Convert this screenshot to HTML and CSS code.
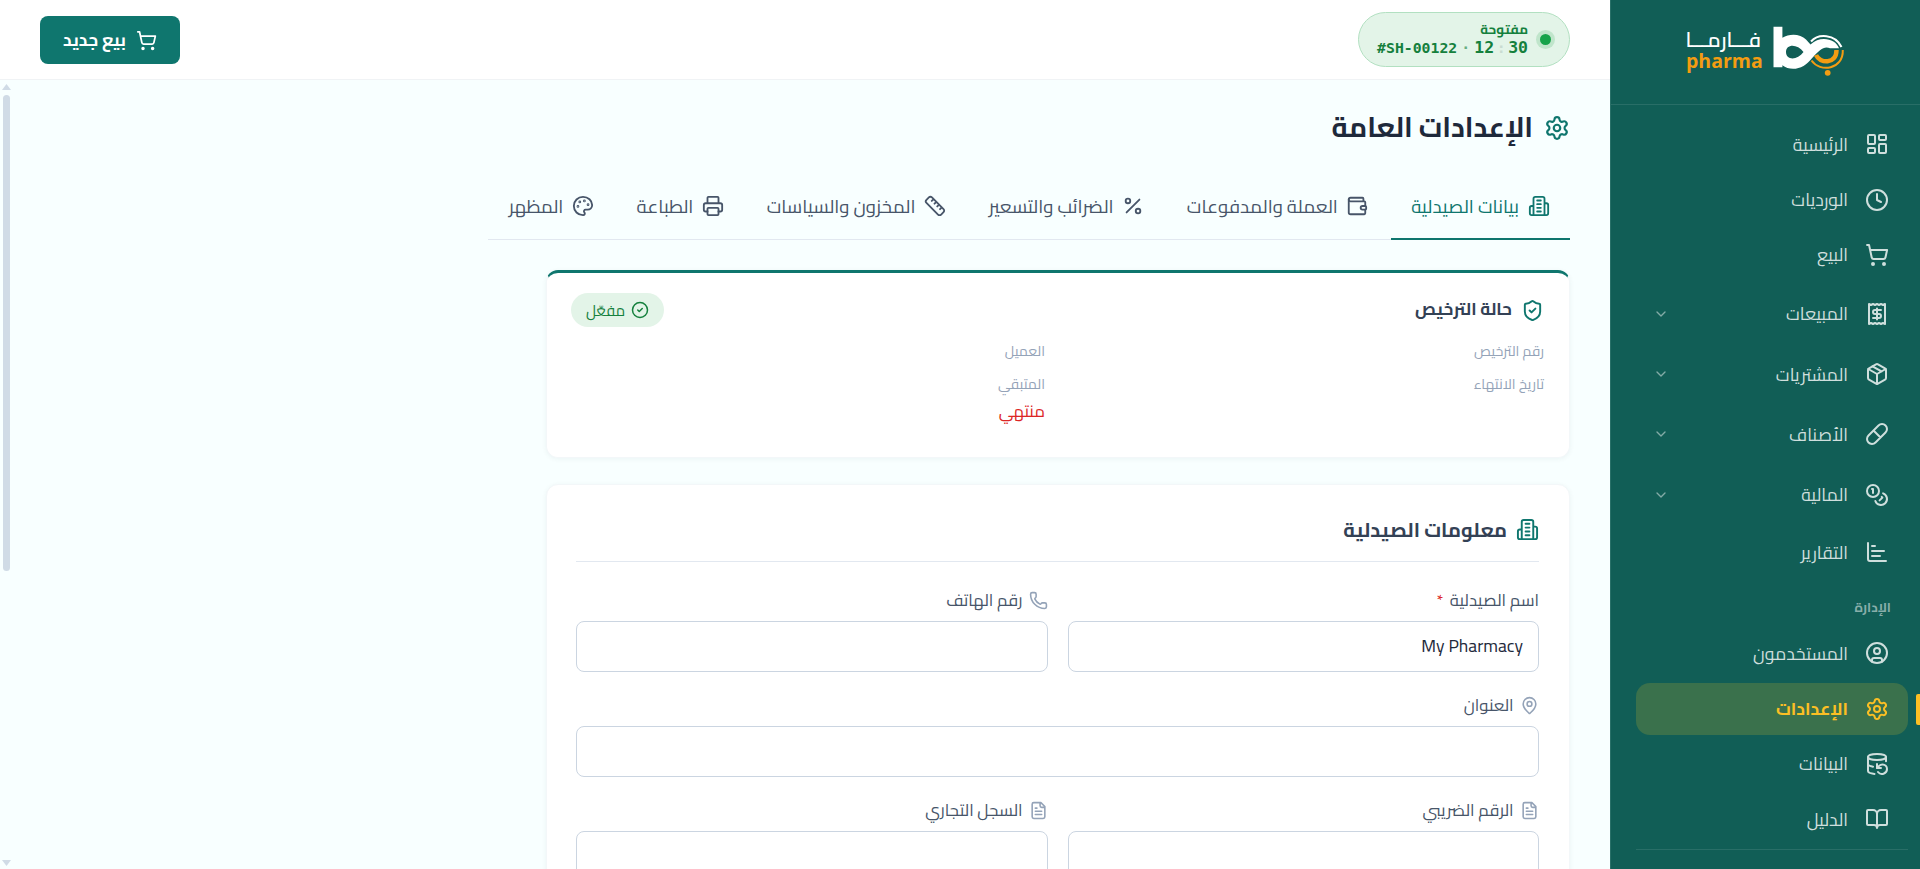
FILE: index.html
```html
<!DOCTYPE html>
<html lang="ar" dir="rtl">
<head>
<meta charset="utf-8">
<title>الإعدادات العامة</title>
<link rel="stylesheet" href="styles.css">
</head>
<body>
<svg class="sprite" aria-hidden="true">
  <symbol id="dashboard" viewBox="0 0 24 24"><rect x="3" y="3" width="7" height="9" rx="1"/><rect x="14" y="3" width="7" height="5" rx="1"/><rect x="14" y="12" width="7" height="9" rx="1"/><rect x="3" y="16" width="7" height="5" rx="1"/></symbol>
  <symbol id="clock" viewBox="0 0 24 24"><circle cx="12" cy="12" r="10"/><path d="M12 6v6l4 2"/></symbol>
  <symbol id="cart" viewBox="0 0 24 24"><circle cx="8" cy="21" r="1"/><circle cx="19" cy="21" r="1"/><path d="M2.05 2.05h2l2.66 12.42a2 2 0 0 0 2 1.58h9.78a2 2 0 0 0 1.95-1.57l1.65-7.43H5.12"/></symbol>
  <symbol id="receipt" viewBox="0 0 24 24"><path d="M4 2v20l2-1 2 1 2-1 2 1 2-1 2 1 2-1 2 1V2l-2 1-2-1-2 1-2-1-2 1-2-1-2 1Z"/><path d="M16 8h-6a2 2 0 1 0 0 4h4a2 2 0 1 1 0 4H8M12 17.5v-11"/></symbol>
  <symbol id="package" viewBox="0 0 24 24"><path d="M11 21.73a2 2 0 0 0 2 0l7-4A2 2 0 0 0 21 16V8a2 2 0 0 0-1-1.73l-7-4a2 2 0 0 0-2 0l-7 4A2 2 0 0 0 3 8v8a2 2 0 0 0 1 1.73z"/><path d="M12 22V12M3.29 7 12 12l8.71-5M7.5 4.27l9 5.15"/></symbol>
  <symbol id="pill" viewBox="0 0 24 24"><path d="m10.5 20.5 10-10a4.95 4.95 0 1 0-7-7l-10 10a4.95 4.95 0 1 0 7 7ZM8.5 8.5l7 7"/></symbol>
  <symbol id="coins" viewBox="0 0 24 24"><circle cx="8" cy="8" r="6"/><path d="M18.09 10.37A6 6 0 1 1 10.34 18M7 6h1v4M16.71 13.88l.7.71-2.82 2.82"/></symbol>
  <symbol id="chart" viewBox="0 0 24 24"><path d="M3 3v16a2 2 0 0 0 2 2h16M7 16h8M7 11h12M7 6h3"/></symbol>
  <symbol id="user" viewBox="0 0 24 24"><circle cx="12" cy="12" r="10"/><circle cx="12" cy="10" r="3"/><path d="M7 20.662V19a2 2 0 0 1 2-2h6a2 2 0 0 1 2 2v1.662"/></symbol>
  <symbol id="gear" viewBox="0 0 24 24"><path d="M9.671 4.136a2.34 2.34 0 0 1 4.659 0 2.34 2.34 0 0 0 3.319 1.915 2.34 2.34 0 0 1 2.33 4.033 2.34 2.34 0 0 0 0 3.831 2.34 2.34 0 0 1-2.33 4.033 2.34 2.34 0 0 0-3.319 1.915 2.34 2.34 0 0 1-4.659 0 2.34 2.34 0 0 0-3.32-1.915 2.34 2.34 0 0 1-2.33-4.033 2.34 2.34 0 0 0 0-3.831A2.34 2.34 0 0 1 6.35 6.051a2.34 2.34 0 0 0 3.319-1.915"/><circle cx="12" cy="12" r="3"/></symbol>
  <symbol id="database" viewBox="0 0 24 24"><ellipse cx="12" cy="5" rx="9" ry="3"/><path d="M3 12a9 3 0 0 0 5 2.69M21 9.3V5M3 5v14a9 3 0 0 0 6.47 2.88M12 12v4h4"/><path d="M13 20a5 5 0 0 0 9-3 4.5 4.5 0 0 0-4.5-4.5c-1.33 0-2.54.54-3.41 1.41L12 16"/></symbol>
  <symbol id="book" viewBox="0 0 24 24"><path d="M12 7v14M3 18a1 1 0 0 1-1-1V4a1 1 0 0 1 1-1h5a4 4 0 0 1 4 4 4 4 0 0 1 4-4h5a1 1 0 0 1 1 1v13a1 1 0 0 1-1 1h-6a3 3 0 0 0-3 3 3 3 0 0 0-3-3z"/></symbol>
  <symbol id="chevron" viewBox="0 0 24 24"><path d="m6 9 6 6 6-6"/></symbol>
  <symbol id="building" viewBox="0 0 24 24"><path d="M6 22V4a2 2 0 0 1 2-2h8a2 2 0 0 1 2 2v18ZM6 12H4a2 2 0 0 0-2 2v6a2 2 0 0 0 2 2h2M18 9h2a2 2 0 0 1 2 2v9a2 2 0 0 1-2 2h-2M10 6h4M10 10h4M10 14h4M10 18h4"/></symbol>
  <symbol id="wallet" viewBox="0 0 24 24"><path d="M19 7V4a1 1 0 0 0-1-1H5a2 2 0 0 0 0 4h15a1 1 0 0 1 1 1v4h-3a2 2 0 0 0 0 4h3a1 1 0 0 0 1-1v-2a1 1 0 0 0-1-1"/><path d="M3 5v14a2 2 0 0 0 2 2h15a1 1 0 0 0 1-1v-4"/></symbol>
  <symbol id="percent" viewBox="0 0 24 24"><path d="M19 5 5 19"/><circle cx="6.5" cy="6.5" r="2.5"/><circle cx="17.5" cy="17.5" r="2.5"/></symbol>
  <symbol id="ruler" viewBox="0 0 24 24"><path d="M21.3 15.3a2.4 2.4 0 0 1 0 3.4l-2.6 2.6a2.4 2.4 0 0 1-3.4 0L2.7 8.7a2.41 2.41 0 0 1 0-3.4l2.6-2.6a2.41 2.41 0 0 1 3.4 0ZM14.5 12.5l2-2M11.5 9.5l2-2M8.5 6.5l2-2M17.5 15.5l2-2"/></symbol>
  <symbol id="printer" viewBox="0 0 24 24"><path d="M6 18H4a2 2 0 0 1-2-2v-5a2 2 0 0 1 2-2h16a2 2 0 0 1 2 2v5a2 2 0 0 1-2 2h-2M6 9V3a1 1 0 0 1 1-1h10a1 1 0 0 1 1 1v6"/><rect x="6" y="14" width="12" height="8" rx="1"/></symbol>
  <symbol id="palette" viewBox="0 0 24 24"><path d="M12 22a1 1 0 0 1 0-20 10 9 0 0 1 10 9 5 5 0 0 1-5 5h-2.25a1.75 1.75 0 0 0-1.4 2.8l.3.4a1.75 1.75 0 0 1-1.4 2.8z"/><circle cx="13.5" cy="6.5" r=".5"/><circle cx="17.5" cy="10.5" r=".5"/><circle cx="6.5" cy="12.5" r=".5"/><circle cx="8.5" cy="7.5" r=".5"/></symbol>
  <symbol id="shield" viewBox="0 0 24 24"><path d="M20 13c0 5-3.5 7.5-7.66 8.95a1 1 0 0 1-.67-.01C7.5 20.5 4 18 4 13V6a1 1 0 0 1 1-1c2 0 4.5-1.2 6.24-2.72a1.17 1.17 0 0 1 1.52 0C14.51 3.81 17 5 19 5a1 1 0 0 1 1 1zM9 12l2 2 4-4"/></symbol>
  <symbol id="check" viewBox="0 0 24 24"><circle cx="12" cy="12" r="10"/><path d="m9 12 2 2 4-4"/></symbol>
  <symbol id="phone" viewBox="0 0 24 24"><path d="M13.832 16.568a1 1 0 0 0 1.213-.303l.355-.465A2 2 0 0 1 17 15h3a2 2 0 0 1 2 2v3a2 2 0 0 1-2 2A18 18 0 0 1 2 4a2 2 0 0 1 2-2h3a2 2 0 0 1 2 2v3a2 2 0 0 1-.8 1.6l-.468.351a1 1 0 0 0-.292 1.233 14 14 0 0 0 6.392 6.384"/></symbol>
  <symbol id="pin" viewBox="0 0 24 24"><path d="M20 10c0 4.993-5.539 10.193-7.399 11.799a1 1 0 0 1-1.202 0C9.539 20.193 4 14.993 4 10a8 8 0 0 1 16 0"/><circle cx="12" cy="10" r="3"/></symbol>
  <symbol id="file" viewBox="0 0 24 24"><path d="M15 2H6a2 2 0 0 0-2 2v16a2 2 0 0 0 2 2h12a2 2 0 0 0 2-2V7ZM14 2v4a2 2 0 0 0 2 2h4M10 9H8M16 13H8M16 17H8"/></symbol>
</svg>

<div class="app">
  <aside class="sidebar">
    <div class="brand">
      <svg class="brand-mark" viewBox="0 0 72 51">
        <path class="mark-white" fill-rule="evenodd" d="M.5.7h8.900v11.100C16.500 7.300 27.500 7.800 33 13.500L37.500 18.500C42 14.500 46 13 51 13c7 0 13 3.600 15 9.200h-9c-3-1.400-6.700-1-9.700 1.800C41 29 36.500 36.500 30.500 40c-7 4-15.500 3.700-21.100-.7v1.900H.5zM13 26c0 8.500 11.500 8.500 17.500 0C24.500 17.500 13 17.500 13 26z"/>
        <path class="ring ring-white" d="M38 15.500c7-8 24-8 30.500 5.500"/>
        <path class="ring ring-orange" d="M38.500 34.500c8.500 12.500 32 9 31.300-10.500"/>
        <path class="crescent" d="M43 29c3.500 8.500 20.500 10 20.500-5"/>
        <circle class="mark-orange" cx="54.700" cy="46.800" r="2.900"/>
      </svg>
      <div class="brand-text"><span class="brand-ar">فـــارمـــا</span><span class="brand-en">pharma</span></div>
    </div>
    <nav class="nav">
      <a class="item"><svg class="ic"><use href="#dashboard"/></svg><span>الرئيسية</span></a>
      <a class="item"><svg class="ic"><use href="#clock"/></svg><span>الورديات</span></a>
      <a class="item"><svg class="ic"><use href="#cart"/></svg><span>البيع</span></a>
      <a class="item group"><svg class="ic"><use href="#receipt"/></svg><span>المبيعات</span><svg class="chev"><use href="#chevron"/></svg></a>
      <a class="item group"><svg class="ic"><use href="#package"/></svg><span>المشتريات</span><svg class="chev"><use href="#chevron"/></svg></a>
      <a class="item group"><svg class="ic"><use href="#pill"/></svg><span>الأصناف</span><svg class="chev"><use href="#chevron"/></svg></a>
      <a class="item group"><svg class="ic"><use href="#coins"/></svg><span>المالية</span><svg class="chev"><use href="#chevron"/></svg></a>
      <a class="item"><svg class="ic"><use href="#chart"/></svg><span>التقارير</span></a>
      <div class="section">الإدارة</div>
      <a class="item"><svg class="ic"><use href="#user"/></svg><span>المستخدمون</span></a>
      <a class="item active"><svg class="ic"><use href="#gear"/></svg><span>الإعدادات</span></a>
      <a class="item"><svg class="ic"><use href="#database"/></svg><span>البيانات</span></a>
      <a class="item"><svg class="ic"><use href="#book"/></svg><span>الدليل</span></a>
    </nav>
    <div class="side-foot"></div>
  </aside>

  <div class="main">
    <header class="topbar">
      <div class="shift">
        <i class="dot"></i>
        <div class="shift-text">
          <span class="shift-state">مفتوحة</span>
          <div class="shift-line" dir="ltr"><span class="shift-id">#SH-00122</span><span class="mid">·</span><span class="num">12</span><span class="colon">:</span><span class="num">30</span></div>
        </div>
      </div>
      <button class="sale"><svg class="ic"><use href="#cart"/></svg><span>بيع جديد</span></button>
    </header>

    <div class="body">
      <div class="content">
        <h1 class="title"><svg class="ic"><use href="#gear"/></svg><span>الإعدادات العامة</span></h1>
        <div class="tabs">
          <a class="tab on"><svg class="ic"><use href="#building"/></svg><span>بيانات الصيدلية</span></a>
          <a class="tab"><svg class="ic"><use href="#wallet"/></svg><span>العملة والمدفوعات</span></a>
          <a class="tab"><svg class="ic"><use href="#percent"/></svg><span>الضرائب والتسعير</span></a>
          <a class="tab"><svg class="ic"><use href="#ruler"/></svg><span>المخزون والسياسات</span></a>
          <a class="tab"><svg class="ic"><use href="#printer"/></svg><span>الطباعة</span></a>
          <a class="tab"><svg class="ic"><use href="#palette"/></svg><span>المظهر</span></a>
        </div>

        <section class="card license">
          <div class="license-head">
            <h2 class="license-title"><svg class="ic"><use href="#shield"/></svg><span>حالة الترخيص</span></h2>
            <span class="badge"><svg class="ic"><use href="#check"/></svg><span>مفعّل</span></span>
          </div>
          <div class="facts">
            <div class="fact">رقم الترخيص</div>
            <div class="fact">العميل</div>
            <div class="fact">تاريخ الانتهاء</div>
            <div class="fact">المتبقي<div class="expired">منتهي</div></div>
          </div>
        </section>

        <section class="card info">
          <h2 class="info-title"><svg class="ic"><use href="#building"/></svg><span>معلومات الصيدلية</span></h2>
          <div class="form">
            <div class="field"><div class="label"><span>اسم الصيدلية</span><b class="req">*</b></div><div class="input">My Pharmacy</div></div>
            <div class="field"><div class="label"><svg class="ic"><use href="#phone"/></svg><span>رقم الهاتف</span></div><div class="input"></div></div>
            <div class="field wide"><div class="label"><svg class="ic"><use href="#pin"/></svg><span>العنوان</span></div><div class="input"></div></div>
            <div class="field"><div class="label"><svg class="ic"><use href="#file"/></svg><span>الرقم الضريبي</span></div><div class="input"></div></div>
            <div class="field"><div class="label"><svg class="ic"><use href="#file"/></svg><span>السجل التجاري</span></div><div class="input"></div></div>
          </div>
        </section>
      </div>
      <div class="scroll"><i class="up"></i><i class="thumb"></i><i class="down"></i></div>
    </div>
  </div>
</div>
</body>
</html>
```
FILE: styles.css
```css
* { box-sizing: border-box; }
body {
  margin: 0;
  height: 869px;
  overflow: hidden;
  background: #f8ffff;
  color: #1e293b;
  font-family: Cairo, "Noto Sans", "DejaVu Sans", sans-serif;
  font-size: 17.6px;
  white-space: nowrap;
}
h1, h2 { margin: 0; }
.sprite { position: absolute; width: 0; height: 0; }
.ic, .chev {
  flex: none;
  width: 24px;
  height: 24px;
  fill: none;
  stroke: currentColor;
  stroke-width: 2;
  stroke-linecap: round;
  stroke-linejoin: round;
}
.app { display: flex; height: 869px; }

/* sidebar */
.sidebar {
  flex: none;
  width: 310px;
  background: #115e56;
  border-left: 1px solid #297068;
  overflow: hidden;
}
.brand {
  display: flex;
  height: 105px;
  padding: 26px 75px 0 0;
  gap: 12px;
  border-bottom: 1px solid #296e67;
}
.brand-mark { flex: none; width: 72px; height: 51px; }
.mark-white { fill: #fff; }
.mark-orange { fill: #f39c12; }
.ring { fill: none; stroke-width: 2; }
.ring-white { stroke: #fff; }
.ring-orange { stroke: #f39c12; }
.crescent { fill: none; stroke: #f39c12; stroke-width: 4.5; }
.brand-text { display: flex; flex-direction: column; width: 75px; padding-top: 1px; }
.brand-ar { color: #fff; font-size: 20.7px; font-weight: 600; line-height: 25px; }
.brand-en {
  direction: ltr;
  color: #f39c12;
  font: 700 19.5px/18px "Open Sans", sans-serif;
}
.nav { display: flex; flex-direction: column; padding: 13.4px 12px 0 25px; }
.item {
  position: relative;
  display: flex;
  flex: none;
  align-items: center;
  gap: 17px;
  height: 52px;
  margin-bottom: 3.3px;
  padding: 0 19px;
  color: #cfdfdd;
  border-radius: 14px;
}
.group { height: 56px; margin: 1.6px 0 4.3px; }
.group + .group { margin-top: 0; }
.group + .item:not(.group) { margin-top: -1px; }
.chev { width: 16px; height: 16px; margin-right: auto; opacity: .6; }
.item.group { padding-left: 17px; }
.section {
  flex: none;
  height: 46px;
  padding: 18px 17px 0 0;
  color: #88aeaa;
  font-size: 13.2px;
  font-weight: 700;
  line-height: 18px;
}
.active { background: #3a714c; color: #fbbf24; font-weight: 700; }
.active::before {
  content: "";
  position: absolute;
  right: -12px;
  top: 11px;
  width: 4px;
  height: 31px;
  background: #fbbf24;
  border-radius: 2px 0 0 2px;
}
.side-foot { margin: 0 12px 0 25px; border-top: 1px solid #296e67; }

/* top bar */
.main { flex: 1; display: flex; flex-direction: column; }
.topbar {
  display: flex;
  justify-content: space-between;
  align-items: flex-start;
  height: 80px;
  padding: 12px 40px 0;
  background: #fff;
  border-bottom: 1px solid #f0f3f5;
}
.shift {
  display: flex;
  align-items: center;
  width: 212px;
  height: 55px;
  padding-right: 18px;
  gap: 12px;
  background: #e3f4e8;
  border: 1px solid #b2e0c1;
  border-radius: 28px;
}
.dot {
  flex: none;
  width: 11px;
  height: 11px;
  border-radius: 50%;
  background: #16a34a;
  box-shadow: 0 0 0 4px #c0e5cb;
}
.shift-text { display: flex; flex-direction: column; padding-bottom: 2px; color: #15803d; }
.shift-state { font-size: 13.4px; font-weight: 700; line-height: 19px; }
.shift-line {
  display: flex;
  align-items: center;
  height: 18px;
  font: 700 14.8px/16px "DejaVu Sans Mono", monospace;
}
.mid { width: 17px; text-align: center; opacity: .6; }
.num { font-size: 16.5px; }
.colon { width: 14px; text-align: center; color: #c9dcd2; }
.sale {
  display: flex;
  align-items: center;
  justify-content: center;
  gap: 10px;
  width: 140px;
  height: 48px;
  margin-top: 4px;
  border: 0;
  border-radius: 8px;
  background: #0f766e;
  color: #fff;
  font: inherit;
  font-size: 17.2px;
  font-weight: 700;
}
.sale .ic { width: 21px; height: 21px; }

/* page */
.body { flex: 1; display: flex; justify-content: space-between; min-height: 0; }
.content { width: 1122px; padding: 26px 40px 0 0; overflow: hidden; }
.title {
  display: flex;
  align-items: center;
  gap: 11px;
  height: 44px;
  font-size: 27.9px;
  line-height: 40px;
}
.title span { padding-bottom: 3px; }
.title .ic { width: 26px; height: 26px; color: #0f766e; }
.tabs {
  display: flex;
  gap: 1.8px;
  height: 66px;
  margin-top: 24px;
  border-bottom: 1px solid #e2e8f0;
  color: #475569;
  font-size: 18.6px;
}
.tab {
  display: flex;
  align-items: center;
  gap: 8.5px;
  height: 66px;
  padding: 0 20.5px;
  border-bottom: 2px solid transparent;
}
.tab .ic { width: 22px; height: 22px; }
.tab.on { color: #0f766e; border-color: #0f766e; }
.card {
  width: 1024px;
  background: #fff;
  border: 1px solid #f3f7f9;
  border-radius: 12px;
  box-shadow: 0 1px 5px rgba(15, 60, 60, .06);
}
.license { height: 188px; margin-top: 30px; padding: 20px 25px 0 24px; border-top: 3px solid #0f766e; }
.license-head { display: flex; justify-content: space-between; align-items: center; height: 34px; }
.license-title { display: flex; align-items: center; gap: 9px; font-size: 17.1px; line-height: 26px; color: #334155; }
.license-title span { padding-bottom: 2px; }
.license-title .ic { width: 23px; height: 23px; color: #0f766e; }
.badge {
  display: flex;
  align-items: center;
  justify-content: center;
  gap: 6px;
  width: 93px;
  height: 34px;
  border-radius: 17px;
  background: #e3f4e8;
  color: #15803d;
  font-size: 15px;
}
.badge .ic { width: 18px; height: 18px; }
.facts {
  display: grid;
  grid-template-columns: 475px 475px;
  column-gap: 24px;
  margin-top: 12px;
  color: #94a3b8;
  font-size: 14.1px;
}
.fact { line-height: 24px; margin-bottom: 9px; }
.expired { color: #dc2626; font-size: 16.7px; line-height: 30px; }
.info { height: 500px; margin-top: 26px; padding: 28px 30px 0 29px; }
.info-title {
  display: flex;
  align-items: center;
  gap: 9px;
  height: 49px;
  padding-bottom: 15px;
  border-bottom: 1px solid #e2e8f0;
  font-size: 20px;
  color: #334155;
}
.info-title .ic { width: 23px; height: 23px; color: #0f766e; }
.form { display: grid; grid-template-columns: 471px 472px; gap: 21px 20px; margin-top: 26px; }
.wide { grid-column: span 2; }
.label {
  display: flex;
  align-items: center;
  gap: 6.5px;
  height: 24px;
  margin-bottom: 9px;
  color: #475569;
  font-size: 16.7px;
}
.label .ic { width: 19px; height: 19px; color: #94a3b8; }
.req { color: #dc2626; font-size: 16px; font-weight: 400; }
.input {
  height: 51px;
  padding: 0 15px;
  border: 1px solid #cbd5e1;
  border-radius: 8px;
  color: #1e293b;
  line-height: 47px;
}

/* scrollbar */
.scroll {
  display: flex;
  flex-direction: column;
  width: 11px;
  padding: 4px 0 3px 2px;
}
.up, .down {
  width: 9px;
  height: 6px;
  background: #d0dbe6;
  clip-path: polygon(50% 0, 100% 100%, 0 100%);
}
.down { margin-top: auto; clip-path: polygon(0 0, 100% 0, 50% 100%); }
.thumb { width: 7px; height: 476px; margin: 5px 1px 0 0; border-radius: 4px; background: #d0dbe6; }
```
